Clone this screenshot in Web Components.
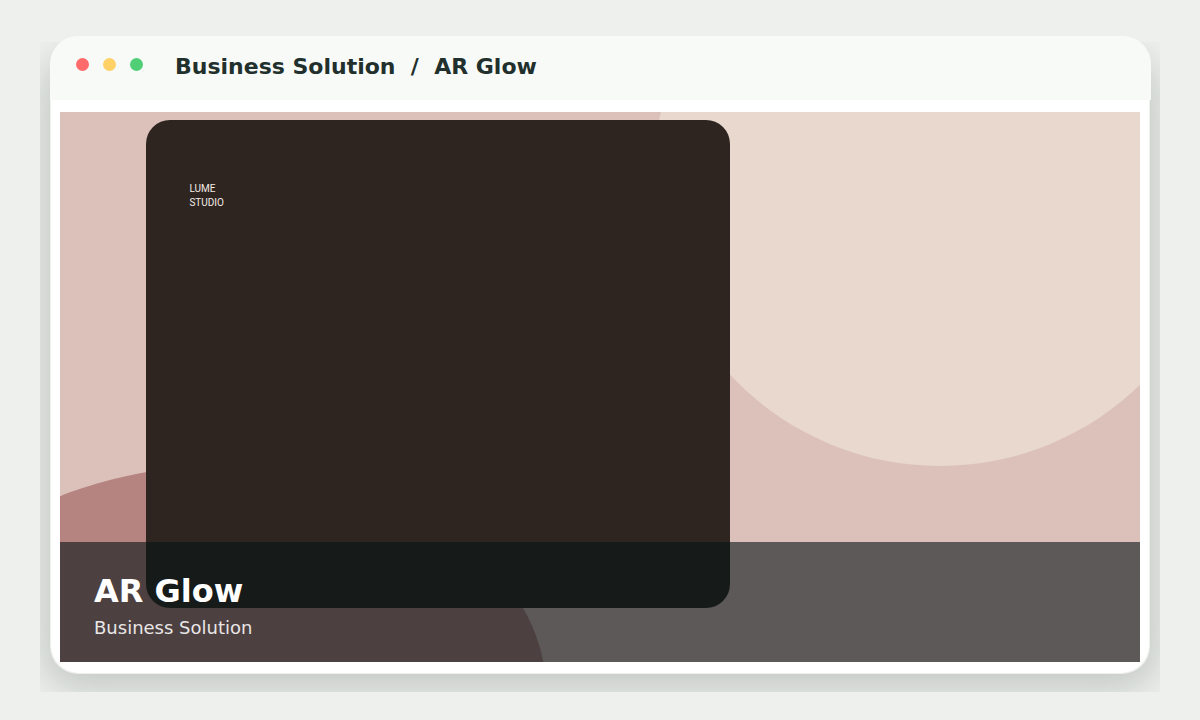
<!DOCTYPE html>
<html lang="en">
<head>
<meta charset="utf-8">
<title>Business Solution / AR Glow</title>
<style>
html, body { height: 100%; margin: 0; }
body { background: #eef0ed; font-family: "DejaVu Sans", sans-serif; }
</style>
</head>
<body>
<preview-window>
  <window-bar slot="bar">Business Solution&nbsp; /&nbsp; AR Glow</window-bar>
  <art-scene>
    <brand-panel><span>LUME</span><span>STUDIO</span></brand-panel>
    <caption-band slot="caption"><span slot="title">AR Glow</span>Business Solution</caption-band>
  </art-scene>
</preview-window>
<script>
function define(name, html) {
  const template = document.createElement('template');
  template.innerHTML = html;
  customElements.define(name, class extends HTMLElement {
    constructor() {
      super();
      this.attachShadow({ mode: 'open' }).append(template.content.cloneNode(true));
    }
  });
}

define('preview-window', `
  <style>
    :host { display: flex; box-sizing: border-box; min-height: 100%; padding: 36px 49px 47px 50px; position: relative; }
    .shadow { position: absolute; inset: 42px 40px 28px; overflow: hidden; }
    .shadow::before { content: ""; position: absolute; inset: 12px 10px 18px; border-radius: 28px; box-shadow: 0 8px 36px 8px rgba(30, 50, 45, .2); }
    .card { position: relative; flex: 1; display: flex; flex-direction: column; min-width: 0; }
    .body { flex: 1; display: flex; margin: 0 2px 0 1px; padding: 12px 9px 11px; box-sizing: border-box; background: #fff; border-radius: 0 0 28px 28px; }
  </style>
  <div class="shadow"></div>
  <main class="card">
    <slot name="bar"></slot>
    <div class="body"><slot></slot></div>
  </main>`);

define('window-bar', `
  <style>
    :host { display: flex; align-items: center; box-sizing: border-box; height: 64px; padding: 0 26px; background: #f8faf7; border-radius: 28px 28px 0 0; }
    .dots { display: flex; gap: 14px; padding-bottom: 7px; margin-right: 32px; }
    i { width: 13px; height: 13px; border-radius: 50%; background: #ff6b6b; }
    i:nth-child(2) { background: #ffd166; }
    i:nth-child(3) { background: #51cf76; }
    h1 { margin: 0; padding-bottom: 3px; font-size: 22px; line-height: 28px; font-weight: 700; color: #22302d; white-space: nowrap; }
  </style>
  <div class="dots"><i></i><i></i><i></i></div>
  <h1><slot></slot></h1>`);

define('art-scene', `
  <style>
    :host { flex: 1; display: flex; flex-direction: column; position: relative; overflow: hidden; background: #dcc1bb; }
    svg { position: absolute; inset: 0; width: 100%; height: 100%; }
    .content { flex: 1; position: relative; padding: 8px 38% 54px 8%; display: flex; }
    .caption { position: absolute; left: 0; right: 0; bottom: 0; }
  </style>
  <svg viewBox="0 0 1080 550" preserveAspectRatio="none" aria-hidden="true">
    <circle cx="880" cy="67" r="287" fill="#e8d8cd"/>
    <ellipse cx="162" cy="579" rx="324" ry="225" fill="#b58380"/>
  </svg>
  <div class="content"><slot></slot></div>
  <div class="caption"><slot name="caption"></slot></div>`);

define('brand-panel', `
  <style>
    :host { flex: 1; display: flex; flex-direction: column; box-sizing: border-box; padding: 62px 43px; border-radius: 24px; background: #2e2520; color: #f5ece6; font: 10px/14px Roboto, sans-serif; }
  </style>
  <slot></slot>`);

define('caption-band', `
  <style>
    :host { display: block; box-sizing: border-box; height: 120px; padding: 29px 34px; background: rgba(6, 20, 22, .6); color: #e9e6e6; font-size: 18px; line-height: 24px; }
    h2 { margin: 0 0 5px; font-size: 32px; line-height: 40px; color: #fff; }
    p { margin: 0; }
  </style>
  <h2><slot name="title"></slot></h2>
  <p><slot></slot></p>`);
</script>
</body>
</html>
